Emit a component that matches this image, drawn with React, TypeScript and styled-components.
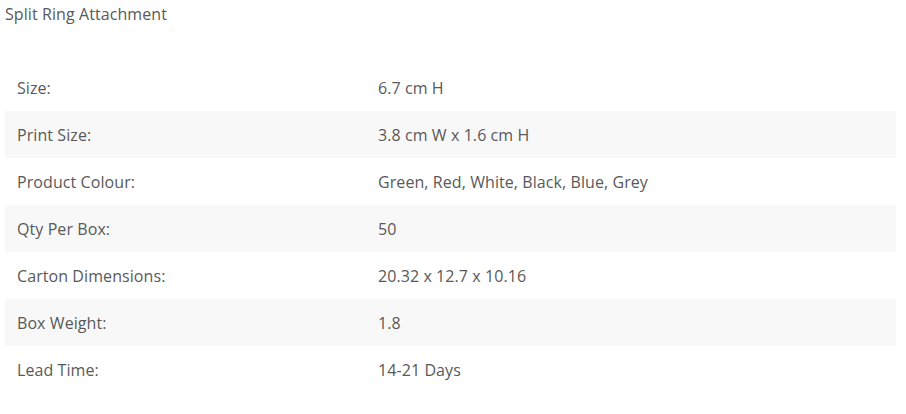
import styled, { createGlobalStyle } from "styled-components";

const Global = createGlobalStyle`
  body {
    margin: 0;
    background: #fff;
    font-family: "Open Sans", "Liberation Sans", sans-serif;
    font-size: 16px;
    letter-spacing: 0.08px;
    color: #595959;
  }
`;

const rows: [string, string][] = [
  ["Size:", "6.7 cm H"],
  ["Print Size:", "3.8 cm W x 1.6 cm H"],
  ["Product Colour:", "Green, Red, White, Black, Blue, Grey"],
  ["Qty Per Box:", "50"],
  ["Carton Dimensions:", "20.32 x 12.7 x 10.16"],
  ["Box Weight:", "1.8"],
  ["Lead Time:", "14-21 Days"],
];

export default function App() {
  return (
    <>
      <Global />
      <S.Page>
        <S.Title>Split Ring Attachment</S.Title>
        <S.Table>
          <tbody>
            {rows.map(([label, value], i) => (
              <S.Row key={label} striped={i % 2 === 1}>
                <S.Label>{label}</S.Label>
                <S.Value>{value}</S.Value>
              </S.Row>
            ))}
          </tbody>
        </S.Table>
      </S.Page>
    </>
  );
}

const S = {
  Page: styled.div`
    padding: 0 10px 0 5px;
  `,

  Title: styled.div`
    line-height: 22px;
    padding-top: 3px;
  `,

  Table: styled.table`
    width: 891px;
    margin-top: 39px;
    border-collapse: collapse;
    border-spacing: 0;
  `,

  Row: styled.tr<{ striped: boolean }>`
    background: ${(p) => (p.striped ? "#f8f8f8" : "transparent")};
  `,

  Label: styled.td`
    width: 337px;
    height: 47px;
    padding: 0 12px;
    vertical-align: middle;
  `,

  Value: styled.td`
    padding: 0 12px;
    vertical-align: middle;
  `,
};
